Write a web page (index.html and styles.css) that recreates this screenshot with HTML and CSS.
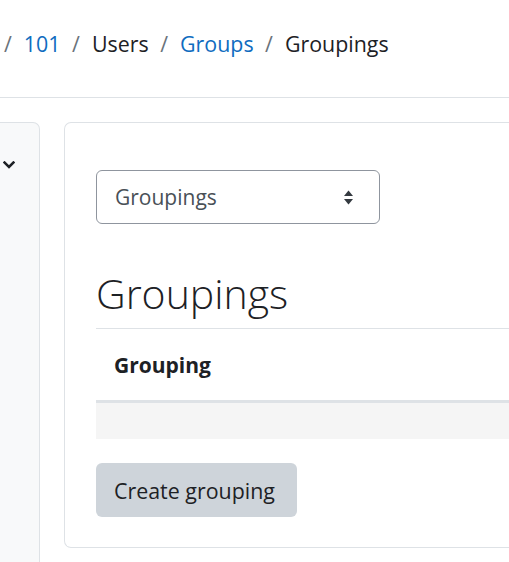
FILE: index.html
```html
<!DOCTYPE html>
<html lang="en">
<head>
<meta charset="utf-8">
<title>Groupings</title>
<link rel="stylesheet" href="styles.css">
</head>
<body>
<header class="page-header">
  <nav class="breadcrumb">
    <span class="sep">/</span>
    <a class="crumb link" href="#">101</a>
    <span class="sep">/</span>
    <span class="crumb">Users</span>
    <span class="sep">/</span>
    <a class="crumb link" href="#">Groups</a>
    <span class="sep">/</span>
    <span class="crumb">Groupings</span>
  </nav>
</header>
<div class="page">
  <aside class="drawer">
    <svg class="chevron" width="12" height="8" viewBox="0 0 12 8" aria-hidden="true">
      <path d="M1.6 1.6 L6 6 L10.4 1.6" fill="none" stroke="#1d2125" stroke-width="2.6" stroke-linecap="square" stroke-linejoin="miter"/>
    </svg>
  </aside>
  <main class="card">
    <div class="select">
      <span class="select-text">Groupings</span>
      <svg class="caret" width="9" height="15" viewBox="0 0 9 15" aria-hidden="true">
        <path d="M0 6 L4.5 0.5 L9 6 Z" fill="#343a40"/>
        <path d="M0 9 L4.5 14.5 L9 9 Z" fill="#343a40"/>
      </svg>
    </div>
    <h2 class="title">Groupings</h2>
    <table class="table">
      <thead>
        <tr><th>Grouping</th></tr>
      </thead>
      <tbody>
        <tr class="stripe"><td></td></tr>
      </tbody>
    </table>
    <button class="btn" type="button">Create grouping</button>
  </main>
</div>
</body>
</html>
```
FILE: styles.css
```css
html, body {
  margin: 0;
  padding: 0;
}
body {
  width: 509px;
  height: 562px;
  overflow: hidden;
  background: #ffffff;
  color: #1d2125;
  font-family: "Open Sans", "Noto Sans", sans-serif;
  font-size: 21px;
}
.page-header {
  height: 97px;
  border-bottom: 1px solid #dee2e6;
  box-sizing: content-box;
}
.breadcrumb {
  display: flex;
  align-items: center;
  padding-top: 28px;
  padding-left: 4px;
  line-height: 32px;
  font-size: 21.4px;
  white-space: nowrap;
}
.sep {
  color: #6a737b;
  margin-right: 12px;
}
.crumb {
  margin-right: 11.5px;
  color: #1d2125;
  text-decoration: none;
}
.crumb.link {
  color: #0f6cbf;
}
.page {
  display: flex;
  align-items: flex-start;
  gap: 24px;
  padding-top: 24px;
  height: 440px;
}
.drawer {
  flex: 0 0 40px;
  align-self: stretch;
  box-sizing: border-box;
  background: #f8f9fa;
  border-top: 1px solid #dee2e6;
  border-right: 1px solid #dee2e6;
  border-top-right-radius: 7px;
  padding-top: 38px;
  padding-left: 3px;
}
.chevron {
  display: block;
}
.card {
  flex: 1 1 auto;
  min-width: 0;
  box-sizing: border-box;
  border: 1px solid #dee2e6;
  border-right: none;
  border-radius: 7px 0 0 7px;
  padding: 47px 0 30px 31px;
}
.select {
  box-sizing: border-box;
  width: 284px;
  height: 54px;
  border: 1px solid #8f959e;
  border-radius: 6px;
  display: flex;
  align-items: center;
  justify-content: space-between;
  padding: 0 26px 0 18px;
  color: #495057;
}
.caret {
  display: block;
}
.title {
  margin: 44px 0 10px 0;
  font-size: 41px;
  font-weight: 300;
  line-height: 50px;
  color: #1d2125;
}
.table {
  width: 100%;
  border-collapse: collapse;
}
.table th {
  text-align: left;
  font-weight: 700;
  border-top: 1px solid #dee2e6;
  border-bottom: 3px solid #dee2e6;
  padding: 0 18px;
  height: 73px;
  box-sizing: border-box;
}
.table td {
  height: 36px;
  padding: 0;
}
.stripe td {
  background: #f5f5f5;
}
.btn {
  display: block;
  margin-top: 24px;
  box-sizing: border-box;
  width: 201px;
  height: 54px;
  padding: 0 18px;
  border: none;
  border-radius: 6px;
  background: #ced4da;
  color: #1d2125;
  font-family: inherit;
  font-size: 21.4px;
  text-align: left;
}
```
